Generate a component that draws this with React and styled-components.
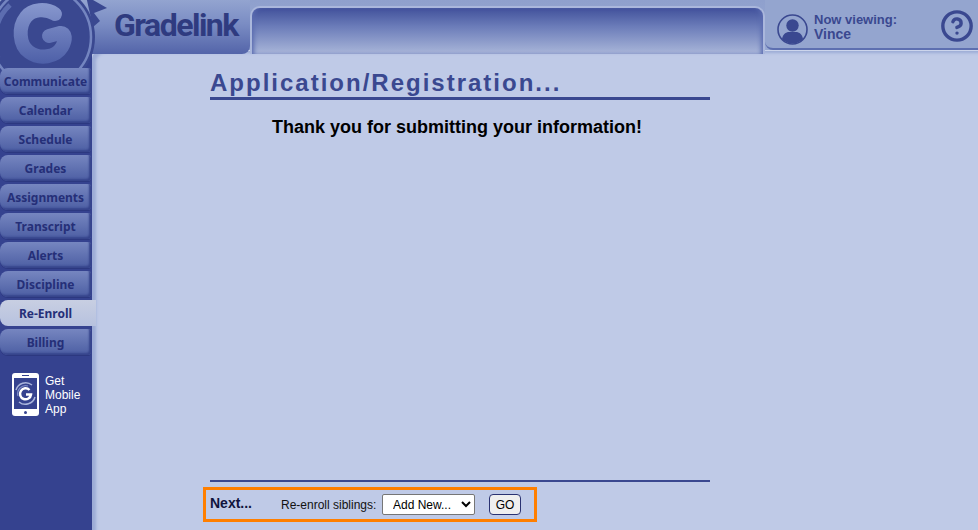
import styled, { createGlobalStyle } from "styled-components";
import { CircleHelp } from "lucide-react";

const navItems = ["Communicate", "Calendar", "Schedule", "Grades", "Assignments", "Transcript", "Alerts", "Discipline", "Re-Enroll", "Billing"];

function LogoMark() {
    return (
        <LogoSvg viewBox="0 0 115 72" width="115" height="72">
            <defs>
                <linearGradient id="gFill" gradientUnits="userSpaceOnUse" x1="0" y1="5" x2="0" y2="63">
                    <stop offset="0" stopColor="#8696cd" />
                    <stop offset="1" stopColor="#4e60a8" />
                </linearGradient>
            </defs>
            <path d="M86 -4 L107 8 L94 13 L100 21 L93 27 Z" fill="#3a4890" />
            <circle cx="41" cy="37" r="54" fill="#3a4890" />
            <circle cx="41" cy="37" r="50" fill="none" stroke="#7485c0" strokeWidth="2.5" />
            <path d="M-2 58 A 48 48 0 0 1 10 5" fill="none" stroke="#5c6db0" strokeWidth="5" />
            <path d="M55 14 C 46 8 32 9 26 17 C 18 27 19 45 29 52 C 40 60 56 57 62 47 C 66 40 66 32 60 33 L 49 36" fill="none" stroke="url(#gFill)" strokeWidth="14" strokeLinecap="round" strokeLinejoin="round" />
        </LogoSvg>
    );
}

function PhoneIcon() {
    return (
        <svg width="27" height="43" viewBox="0 0 27 43">
            <rect width="27" height="43" rx="3" fill="#fff" />
            <rect x="2" y="5" width="23" height="31" fill="#35428f" />
            <rect x="10" y="2" width="7" height="1" fill="#35428f" />
            <circle cx="13.5" cy="39.5" r="1.5" fill="#35428f" />
            <path d="M4 17 A 10 10 0 0 1 20 12 M23 24 A 10 10 0 0 1 7 29" fill="none" stroke="#aab5dc" strokeWidth="1.5" />
            <path d="M6 23 A 8 8 0 0 1 16 13" fill="none" stroke="#7f8dc8" strokeWidth="1.2" />
            <path d="M17.5 17 A 5.5 5.5 0 1 0 19 21.5 L 14 21.5" fill="none" stroke="#fff" strokeWidth="2.5" />
        </svg>
    );
}

function UserIcon() {
    return (
        <svg width="31" height="31" viewBox="0 0 31 31">
            <circle cx="15.5" cy="15.5" r="14.5" fill="none" stroke="#3a4890" strokeWidth="1.6" />
            <circle cx="15.5" cy="11.5" r="6.2" fill="#3a4890" />
            <path d="M5 25 C 6 19 10 18 12 18 L 19 18 C 21 18 25 19 26 25 A 14.5 14.5 0 0 1 5 25 Z" fill="#3a4890" />
        </svg>
    );
}

export default function App() {
    return (
        <>
            <GlobalStyle />
            <Page>
                <Header>
                    <Brand>
                        <LogoMark />
                        <Wordmark>Gradelink</Wordmark>
                    </Brand>
                    <Well />
                    <Account>
                        <UserSlot>
                            <UserIcon />
                        </UserSlot>
                        <Viewing>
                            <span>Now viewing:</span>
                            <strong>Vince</strong>
                        </Viewing>
                        <HelpButton>
                            <CircleHelp size={34} strokeWidth={2.4} />
                        </HelpButton>
                    </Account>
                </Header>
                <Body>
                    <Sidebar>
                        <Nav>
                            {navItems.map((item) => (
                                <NavButton key={item} $active={item === "Re-Enroll"}>{item}</NavButton>
                            ))}
                        </Nav>
                        <MobileLink>
                            <PhoneIcon />
                            <span>Get<br />Mobile<br />App</span>
                        </MobileLink>
                    </Sidebar>
                    <Main>
                        <Column>
                            <Title>Application/Registration...</Title>
                            <Thanks>Thank you for submitting your information!</Thanks>
                            <Footer>
                                <NextBar>
                                    <NextLabel>Next...</NextLabel>
                                    <FieldLabel>Re-enroll siblings:</FieldLabel>
                                    <Select defaultValue="new">
                                        <option value="new">Add New...</option>
                                    </Select>
                                    <GoButton>GO</GoButton>
                                </NextBar>
                            </Footer>
                        </Column>
                    </Main>
                </Body>
            </Page>
        </>
    );
}

const GlobalStyle = createGlobalStyle`
    html, body {
        margin: 0;
        height: 100%;
        overflow: hidden;
        font-family: "Liberation Sans", Arial, sans-serif;
    }
    #root {
        height: 100%;
    }
`
const Page = styled.div`
    height: 100vh;
    display: flex;
    flex-direction: column;
    background-color: #bfcae7;
`
const Header = styled.header`
    height: 54px;
    flex-shrink: 0;
    display: flex;
    align-items: flex-start;
    background: linear-gradient(180deg, #8fa0cd 0%, #98a9d2 100%);
`
const Brand = styled.div`
    position: relative;
    width: 250px;
    height: 54px;
    flex-shrink: 0;
    padding-left: 114px;
    box-sizing: border-box;
    background: linear-gradient(180deg, #93a4d0 0%, #7a8cc3 45%, #5364a9 100%);
    border-bottom-right-radius: 8px;
`
const LogoSvg = styled.svg`
    position: absolute;
    left: 0;
    top: 0;
    z-index: 2;
`
const Wordmark = styled.div`
    font-family: Roboto, sans-serif;
    font-size: 32px;
    font-weight: 700;
    line-height: 50px;
    letter-spacing: -1.5px;
    color: #2f3b80;
`
const Well = styled.div`
    position: relative;
    z-index: 1;
    flex: 1;
    height: 48px;
    margin-top: 6px;
    box-sizing: border-box;
    border: 2px solid #aab7dc;
    border-bottom: none;
    border-radius: 10px 10px 0 0;
    background: linear-gradient(180deg, #41519b 0%, #6b7cb9 40%, #a9b6d9 100%);
    box-shadow: inset 4px 0 4px -2px #5a6bb0, inset -4px 0 4px -2px #5a6bb0;
`
const Account = styled.div`
    position: relative;
    z-index: 1;
    width: 213px;
    height: 50px;
    flex-shrink: 0;
    box-sizing: border-box;
    padding: 4px 0 0 12px;
    display: flex;
    align-items: center;
    gap: 6px;
    background-color: #94a5cf;
    border-bottom: 2px solid #5d6fb0;
    border-bottom-left-radius: 8px;
`
const UserSlot = styled.div`
    display: flex;
    margin-top: 6px;
`
const Viewing = styled.div`
    display: flex;
    flex-direction: column;
    margin-top: 2px;
    font-size: 13px;
    line-height: 15px;
    font-weight: 700;
    color: #3a4890;
    strong {
        font-size: 14px;
    }
`
const HelpButton = styled.div`
    margin-left: auto;
    margin-right: 4px;
    display: flex;
    color: #3a4890;
`
const Body = styled.div`
    flex: 1;
    margin-top: -4px;
    display: flex;
    min-height: 0;
`
const Sidebar = styled.aside`
    width: 92px;
    flex-shrink: 0;
    box-sizing: border-box;
    padding-top: 18px;
    background-color: #35428f;
`
const Nav = styled.nav`
    position: relative;
    z-index: 3;
    display: flex;
    flex-direction: column;
    gap: 3px;
`
const NavButton = styled.div`
    width: ${(props) => (props.$active ? "96px" : "91px")};
    height: 26px;
    display: flex;
    align-items: center;
    justify-content: center;
    box-sizing: border-box;
    padding-right: ${(props) => (props.$active ? "5px" : "0")};
    border-radius: ${(props) => (props.$active ? "8px 0 0 8px" : "8px 3px 3px 8px")};
    font-family: "Noto Sans", sans-serif;
    font-size: 12px;
    font-weight: 700;
    white-space: nowrap;
    color: #252f78;
    background: ${(props) => (props.$active
        ? "linear-gradient(180deg, #c8cfe2 0%, #b7c2df 100%)"
        : "linear-gradient(180deg, #7686c0 0%, #4c5ea3 100%)")};
    box-shadow: ${(props) => (props.$active
        ? "none"
        : "inset -2px -2px 2px #36448c, 0 1px 0 #2c3880")};
`
const MobileLink = styled.div`
    display: flex;
    gap: 6px;
    margin: 18px 0 0 12px;
    font-size: 12px;
    line-height: 14px;
    color: #fff;
    span {
        padding-top: 1px;
    }
`
const Main = styled.main`
    flex: 1;
    min-width: 0;
    border-top-left-radius: 8px;
    background-color: #bfcae7;
    box-shadow: inset 0 1px 0 #ccd5ec, inset 5px 4px 3px -1px #9dacd6;
`
const Column = styled.div`
    width: 500px;
    height: 100%;
    margin-left: 118px;
    box-sizing: border-box;
    padding-top: 19px;
    display: flex;
    flex-direction: column;
`
const Title = styled.h1`
    margin: 0;
    padding-bottom: 1px;
    font-size: 24px;
    line-height: 27px;
    font-weight: 700;
    letter-spacing: 2px;
    color: #3a4890;
    border-bottom: 3px solid #3a4890;
`
const Thanks = styled.div`
    margin-top: 17px;
    padding-right: 6px;
    text-align: center;
    font-size: 18px;
    line-height: 21px;
    font-weight: 700;
    color: #000;
`
const Footer = styled.div`
    margin-top: auto;
    margin-bottom: 8px;
    border-top: 2px solid #3a4890;
    padding-top: 5px;
`
const NextBar = styled.div`
    width: 334px;
    height: 35px;
    margin-left: -7px;
    box-sizing: border-box;
    padding-left: 4px;
    display: flex;
    align-items: center;
    border: 3px solid #ff7f00;
`
const NextLabel = styled.span`
    width: 71px;
    padding-bottom: 3px;
    font-size: 14px;
    font-weight: 700;
    color: #10143c;
`
const FieldLabel = styled.span`
    width: 101px;
    font-size: 12px;
    color: #111;
`
const Select = styled.select`
    width: 93px;
    height: 21px;
    font-family: "Liberation Sans", Arial, sans-serif;
    font-size: 12px;
    color: #000;
    background-color: #fff;
    border: 1px solid #767676;
    border-radius: 2px;
    padding-left: 6px;
`
const GoButton = styled.button`
    width: 32px;
    height: 21px;
    margin-left: 14px;
    padding: 0;
    font-family: "Liberation Sans", Arial, sans-serif;
    font-size: 12px;
    color: #000;
    background-color: #efefef;
    border: 1px solid #2a3272;
    border-radius: 4px;
`
